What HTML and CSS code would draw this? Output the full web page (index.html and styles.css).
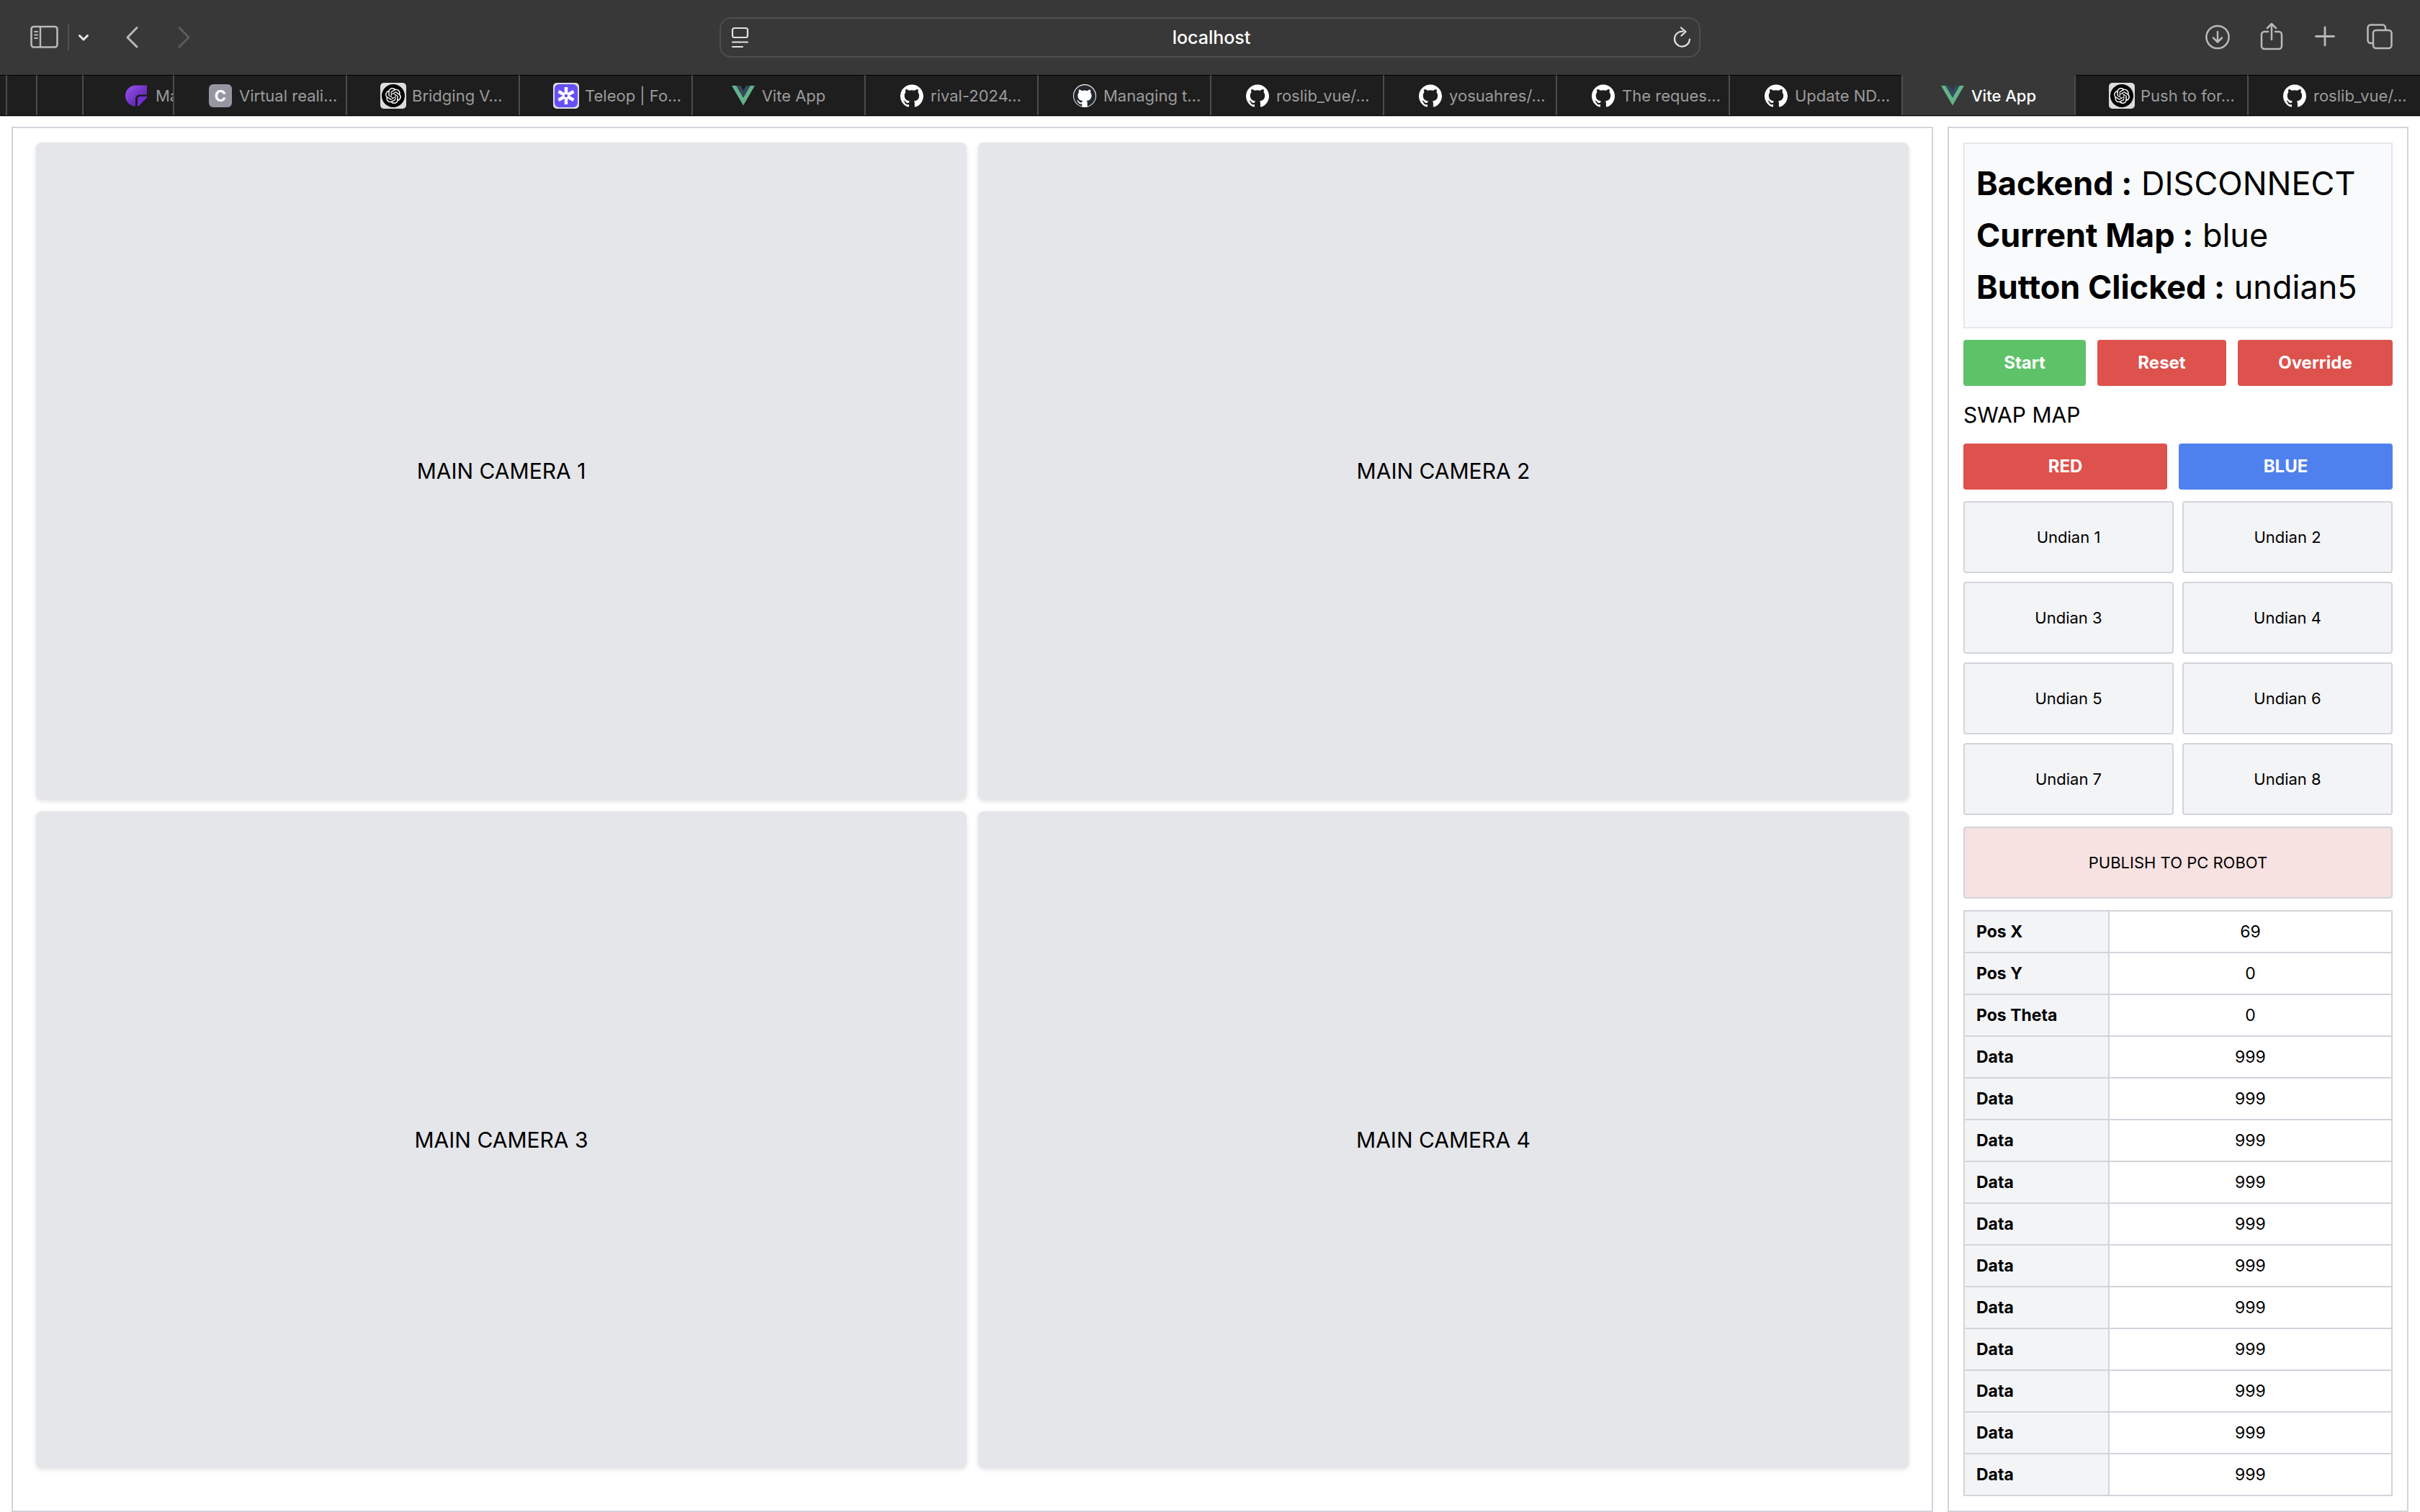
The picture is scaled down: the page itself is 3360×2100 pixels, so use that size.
FILE: index.html
```html
<!DOCTYPE html>
<html lang="en">
<head>
<meta charset="utf-8">
<meta name="viewport" content="width=device-width, initial-scale=1">
<title>Vite App</title>
<link rel="stylesheet" href="styles.css">
</head>
<body>
<svg class="sprite" aria-hidden="true">
  <symbol id="github" viewBox="0 0 24 24"><path d="M12 .297c-6.63 0-12 5.373-12 12 0 5.303 3.438 9.8 8.205 11.385.6.113.82-.258.82-.577 0-.285-.01-1.04-.015-2.04-3.338.724-4.042-1.61-4.042-1.61C4.422 18.07 3.633 17.7 3.633 17.7c-1.087-.744.084-.729.084-.729 1.205.084 1.838 1.236 1.838 1.236 1.07 1.835 2.809 1.305 3.495.998.108-.776.417-1.305.76-1.605-2.665-.3-5.466-1.332-5.466-5.93 0-1.31.465-2.38 1.235-3.22-.135-.303-.54-1.523.105-3.176 0 0 1.005-.322 3.3 1.23.96-.267 1.98-.399 3-.405 1.02.006 2.04.138 3 .405 2.28-1.552 3.285-1.23 3.285-1.23.645 1.653.24 2.873.12 3.176.765.84 1.23 1.91 1.23 3.22 0 4.61-2.805 5.625-5.475 5.92.42.36.81 1.096.81 2.22 0 1.606-.015 2.896-.015 3.286 0 .315.21.69.825.57C20.565 22.092 24 17.592 24 12.297c0-6.627-5.373-12-12-12"/></symbol>
  <symbol id="openai" viewBox="0 0 36 36"><rect width="36" height="36" rx="5" fill="#dcdcdc"/><circle cx="18" cy="18" r="16" fill="#000"/><path transform="translate(7 7) scale(.917)" fill="#fff" d="M22.2819 9.8211a5.9847 5.9847 0 0 0-.5157-4.9108 6.0462 6.0462 0 0 0-6.5098-2.9A6.0651 6.0651 0 0 0 4.9807 4.1818a5.9847 5.9847 0 0 0-3.9977 2.9 6.0462 6.0462 0 0 0 .7427 7.0966 5.98 5.98 0 0 0 .511 4.9107 6.051 6.051 0 0 0 6.5146 2.9001A5.9847 5.9847 0 0 0 13.2599 24a6.0557 6.0557 0 0 0 5.7718-4.2058 5.9894 5.9894 0 0 0 3.9977-2.9001 6.0557 6.0557 0 0 0-.7475-7.0729zm-9.022 12.6081a4.4755 4.4755 0 0 1-2.8764-1.0408l.1419-.0804 4.7783-2.7582a.7948.7948 0 0 0 .3927-.6813v-6.7369l2.02 1.1686a.071.071 0 0 1 .038.052v5.5826a4.504 4.504 0 0 1-4.4945 4.4944zm-9.6607-4.1254a4.4708 4.4708 0 0 1-.5346-3.0137l.142.0852 4.783 2.7582a.7712.7712 0 0 0 .7806 0l5.8428-3.3685v2.3324a.0804.0804 0 0 1-.0332.0615L9.74 19.9502a4.4992 4.4992 0 0 1-6.1408-1.6464zM2.3408 7.8956a4.485 4.485 0 0 1 2.3655-1.9728V11.6a.7664.7664 0 0 0 .3879.6765l5.8144 3.3543-2.0201 1.1685a.0757.0757 0 0 1-.071 0l-4.8303-2.7865A4.504 4.504 0 0 1 2.3408 7.872zm16.5963 3.8558L13.1038 8.364 15.1192 7.2a.0757.0757 0 0 1 .071 0l4.8303 2.7913a4.4944 4.4944 0 0 1-.6765 8.1042v-5.6772a.79.79 0 0 0-.407-.667zm2.0107-3.0231l-.142-.0852-4.7735-2.7818a.7759.7759 0 0 0-.7854 0L9.409 9.2297V6.8974a.0662.0662 0 0 1 .0284-.0615l4.8303-2.7866a4.4992 4.4992 0 0 1 6.6802 4.66zM8.3065 12.863l-2.02-1.1638a.0804.0804 0 0 1-.038-.0567V6.0742a4.4992 4.4992 0 0 1 7.3757-3.4537l-.142.0805L8.704 5.459a.7948.7948 0 0 0-.3927.6813zm1.0976-2.3654l2.602-1.4998 2.6069 1.4998v2.9994l-2.5974 1.4997-2.6067-1.4997Z"/></symbol>
  <symbol id="vue" viewBox="0 0 32 32"><path fill="#63b388" d="M0 2h6.4L16 18.6 25.6 2H32L16 29.6z"/><path fill="#35495e" d="M6.4 2h5.8L16 8.8 19.8 2h5.8L16 18.6z"/></symbol>
</svg>

<header class="browser">
  <div class="toolbar">
    <div class="toolbar-side toolbar-start">
      <button class="tool" type="button" aria-label="Show sidebar"><svg width="40" height="36" viewBox="0 0 40 36" fill="none" stroke="#b9b9b9"><rect x="1.5" y="3" width="36" height="28.500" rx="3.500" stroke-width="2.600"/><path stroke-width="2.400" d="M14 3v28"/><path stroke-width="1.800" stroke-linecap="round" d="M6 10h4.200M6 14.500h4.200M6 19h4.200"/></svg></button>
      <span class="tool-divider"></span>
      <button class="tool" type="button" aria-label="Tab groups"><svg width="16" height="36" viewBox="0 0 16 36" fill="none" stroke="#e6e6e6" stroke-width="3" stroke-linecap="round" stroke-linejoin="round"><path d="M2.500 15.500L8 21l5.500-5.500"/></svg></button>
      <button class="tool tool-nav" type="button" aria-label="Back"><svg width="20" height="36" viewBox="0 0 20 36" fill="none" stroke="#b9b9b9" stroke-width="3" stroke-linecap="round" stroke-linejoin="round"><path d="M16 4.500L3 18l13 13"/></svg></button>
      <button class="tool tool-nav" type="button" aria-label="Forward" disabled><svg width="20" height="36" viewBox="0 0 20 36" fill="none" stroke="#5c5c5c" stroke-width="3" stroke-linecap="round" stroke-linejoin="round"><path d="M5 4.500L18 18 5 31"/></svg></button>
    </div>
    <div class="address">
      <button class="tool" type="button" aria-label="Page settings"><svg width="26" height="36" viewBox="0 0 26 36" fill="none" stroke="#e2e2e2" stroke-width="2.200" stroke-linecap="round"><rect x="2" y="5" width="21" height="13" rx="2.500"/><path d="M2 24.500h21M2 31h14"/></svg></button>
      <input class="address-input" type="text" value="localhost" aria-label="Address">
      <button class="tool" type="button" aria-label="Reload"><svg width="26" height="36" viewBox="0 0 26 36" fill="none" stroke="#e2e2e2" stroke-width="2.200" stroke-linecap="round" stroke-linejoin="round"><path d="M13.500 9.600A10.500 10.500 0 1 0 23 20.500M11 4.500l6.500 5.500-6 5.500"/></svg></button>
    </div>
    <div class="toolbar-side toolbar-end">
      <button class="tool" type="button" aria-label="Downloads"><svg width="36" height="40" viewBox="0 0 36 40" fill="none" stroke="#b9b9b9" stroke-width="2.500" stroke-linecap="round" stroke-linejoin="round"><circle cx="18" cy="19.500" r="15.600"/><path d="M18 12v14M12 20.500l6 6 6-6"/></svg></button>
      <button class="tool" type="button" aria-label="Share"><svg width="36" height="40" viewBox="0 0 36 40" fill="none" stroke="#b9b9b9" stroke-width="2.500" stroke-linecap="round" stroke-linejoin="round"><path d="M13 12H8a4 4 0 0 0-4 4v16a4 4 0 0 0 4 4h20a4 4 0 0 0 4-4V16a4 4 0 0 0-4-4h-5M18 23V2M12 7l6-6 6 6"/></svg></button>
      <button class="tool" type="button" aria-label="New tab"><svg width="36" height="40" viewBox="0 0 36 40" fill="none" stroke="#b9b9b9" stroke-width="2.800" stroke-linecap="round"><path d="M17 6v25M4.500 18.500h25"/></svg></button>
      <button class="tool" type="button" aria-label="Tab overview"><svg width="36" height="40" viewBox="0 0 36 40" fill="none" stroke="#b9b9b9" stroke-width="2.500" stroke-linejoin="round"><path d="M9 28H5.500a4 4 0 0 1-4-4V6.500a4 4 0 0 1 4-4H22a4 4 0 0 1 4 4V10"/><rect x="9" y="10" width="25.500" height="25" rx="4"/></svg></button>
    </div>
  </div>

  <nav class="tabs" aria-label="Open tabs">
    <span class="tab-stack stack-1"></span>
    <span class="tab-stack stack-2"></span>
    <span class="tab-stack stack-3"></span>
    <a class="tab tab-cut" href="#"><svg class="favicon" viewBox="0 0 32 32"><defs><linearGradient id="violet" x1="0" y1="0" x2="1" y2="1"><stop offset="0" stop-color="#9a55f0"/><stop offset="1" stop-color="#4d17a0"/></linearGradient></defs><path fill="url(#violet)" d="M15 1.500h15v13H19.500a5.500 5.500 0 0 0-5.500 5.500v10.500A14.500 14.500 0 0 1 15 1.500z"/><path fill="#6d2fd0" d="M30 17v1.500L18.500 30.500H17v-10A3.500 3.500 0 0 1 20.500 17z"/></svg><span>Ma</span></a>
    <a class="tab" href="#"><span class="favicon favicon-letter">C</span><span>Virtual reali…</span></a>
    <a class="tab" href="#"><svg class="favicon favicon-framed"><use href="#openai"/></svg><span>Bridging V…</span></a>
    <a class="tab" href="#"><svg class="favicon favicon-framed" viewBox="0 0 36 36"><rect width="36" height="36" rx="5" fill="#dcdcdc"/><rect x="2" y="2" width="32" height="32" rx="6" fill="#654ff5"/><g stroke="#fff" stroke-width="4.500"><path d="M18 6v24M7.500 12l21 12M7.500 24l21-12"/></g><circle cx="18" cy="18" r="4.500" fill="#fff"/><circle cx="18" cy="18" r="2.200" fill="#654ff5"/></svg><span>Teleop | Fo…</span></a>
    <a class="tab tab-fit" href="#"><svg class="favicon"><use href="#vue"/></svg><span>Vite App</span></a>
    <a class="tab" href="#"><svg class="favicon"><use href="#github"/></svg><span>rival-2024…</span></a>
    <a class="tab" href="#"><svg class="favicon" viewBox="0 0 32 32"><circle cx="16" cy="16" r="16" fill="#fff"/><use href="#github" x="1" y="1" width="30" height="30" fill="#24292f"/></svg><span>Managing t…</span></a>
    <a class="tab" href="#"><svg class="favicon"><use href="#github"/></svg><span>roslib_vue/…</span></a>
    <a class="tab" href="#"><svg class="favicon"><use href="#github"/></svg><span>yosuahres/…</span></a>
    <a class="tab" href="#"><svg class="favicon"><use href="#github"/></svg><span>The reques…</span></a>
    <a class="tab" href="#"><svg class="favicon"><use href="#github"/></svg><span>Update ND…</span></a>
    <a class="tab tab-fit tab-active" href="#" aria-current="page"><svg class="favicon"><use href="#vue"/></svg><span>Vite App</span></a>
    <a class="tab" href="#"><svg class="favicon favicon-framed"><use href="#openai"/></svg><span>Push to for…</span></a>
    <a class="tab" href="#"><svg class="favicon"><use href="#github"/></svg><span>roslib_vue/…</span></a>
  </nav>
</header>

<main class="dashboard">
  <section class="panel cameras" aria-label="Cameras">
    <div class="camera">MAIN CAMERA 1</div>
    <div class="camera">MAIN CAMERA 2</div>
    <div class="camera">MAIN CAMERA 3</div>
    <div class="camera">MAIN CAMERA 4</div>
  </section>

  <aside class="panel controls" aria-label="Controls">
    <div class="status">
      <p><strong>Backend :</strong> DISCONNECT</p>
      <p><strong>Current Map :</strong> blue</p>
      <p><strong>Button Clicked :</strong> undian5</p>
    </div>
    <div class="button-row">
      <button class="action green" type="button">Start</button>
      <button class="action red" type="button">Reset</button>
      <button class="action red" type="button">Override</button>
    </div>
    <h2 class="heading">SWAP MAP</h2>
    <div class="button-row">
      <button class="action red" type="button">RED</button>
      <button class="action blue" type="button">BLUE</button>
    </div>
    <div class="undian-grid">
      <button class="choice" type="button">Undian 1</button>
      <button class="choice" type="button">Undian 2</button>
      <button class="choice" type="button">Undian 3</button>
      <button class="choice" type="button">Undian 4</button>
      <button class="choice" type="button">Undian 5</button>
      <button class="choice" type="button">Undian 6</button>
      <button class="choice" type="button">Undian 7</button>
      <button class="choice" type="button">Undian 8</button>
    </div>
    <button class="choice publish" type="button">PUBLISH TO PC ROBOT</button>
    <table class="data">
      <tbody>
        <tr><th scope="row">Pos X</th><td>69</td></tr>
        <tr><th scope="row">Pos Y</th><td>0</td></tr>
        <tr><th scope="row">Pos Theta</th><td>0</td></tr>
        <tr><th scope="row">Data</th><td>999</td></tr>
        <tr><th scope="row">Data</th><td>999</td></tr>
        <tr><th scope="row">Data</th><td>999</td></tr>
        <tr><th scope="row">Data</th><td>999</td></tr>
        <tr><th scope="row">Data</th><td>999</td></tr>
        <tr><th scope="row">Data</th><td>999</td></tr>
        <tr><th scope="row">Data</th><td>999</td></tr>
        <tr><th scope="row">Data</th><td>999</td></tr>
        <tr><th scope="row">Data</th><td>999</td></tr>
        <tr><th scope="row">Data</th><td>999</td></tr>
        <tr><th scope="row">Data</th><td>999</td></tr>
      </tbody>
    </table>
  </aside>
</main>
</body>
</html>
```
FILE: styles.css
```css
*, *::before, *::after { box-sizing: border-box; }

body {
  margin: 0;
  min-height: 100vh;
  display: flex;
  flex-direction: column;
  background: #fff;
  color: #000;
  font-family: Inter, "Liberation Sans", sans-serif;
  font-size: 30px;
  line-height: 48px;
}

button, input { font: inherit; color: inherit; }
svg { display: block; }
.sprite { position: absolute; width: 0; height: 0; }

/* Browser toolbar */
.browser {
  background: #383838;
  border-bottom: 1px solid #b8b8b4;
}
.toolbar {
  display: grid;
  grid-template-columns: minmax(0, 1fr) minmax(0, 1362px) minmax(0, 1fr);
  align-items: center;
  height: 104px;
}
.toolbar-side {
  display: flex;
  align-items: center;
}
.toolbar-start { gap: 12px; padding-left: 42px; }
.toolbar-end { justify-content: flex-end; gap: 39px; padding-right: 38px; }
.tool { padding: 0; border: 0; background: none; }
.tool-nav { margin-left: 38px; }
.tool-divider { width: 2px; height: 36px; background: #4f4f4f; }

.address {
  display: flex;
  align-items: center;
  height: 56px;
  padding: 0 10px 0 14px;
  border: 2px solid #4e4e4e;
  border-radius: 16px;
}
.address-input {
  flex: 1;
  min-width: 0;
  padding: 0;
  border: 0;
  background: none;
  color: #fff;
  font-size: 25px;
  font-weight: 500;
  line-height: 32px;
  text-align: center;
}

/* Tab strip */
.tabs {
  display: flex;
  height: 57px;
  border-bottom: 1px solid #000;
}
.tab, .tab-stack {
  background: #1e1e1e;
  border-top: 1px solid #000;
  border-left: 2px solid #4c4c4c;
}
.stack-1 { width: 8px; border-left: 0; }
.stack-2 { width: 42px; }
.stack-3 { width: 64px; }
.tab {
  flex: 1 1 240px;
  min-width: 0;
  display: flex;
  align-items: center;
  gap: 10px;
  padding-left: 48px;
  overflow: hidden;
  color: #9b9b9b;
  font-size: 22px;
  line-height: 28px;
  white-space: nowrap;
  text-decoration: none;
}
.tab-cut { flex: 0 0 126px; padding-left: 58px; }
.tab-fit { justify-content: center; padding-left: 0; }
.tab-active {
  background: #383838;
  border-top-color: #383838;
  color: #fff;
  font-weight: 500;
}
.favicon {
  flex: none;
  width: 32px;
  height: 32px;
  fill: #fff;
}
.favicon-framed { width: 36px; height: 36px; margin: 0 -2px; }
.favicon-letter {
  border-radius: 6px;
  background: #9696a3;
  color: #fff;
  font-weight: 700;
  line-height: 32px;
  text-align: center;
}

/* Dashboard */
.dashboard {
  flex: 1;
  display: flex;
  gap: 20px;
  padding: 14px 16px 0;
}
.panel { border: 2px solid #d1d5db; }
.cameras {
  flex: 1;
  display: grid;
  grid-template-columns: 1fr 1fr;
  grid-auto-rows: 1fr;
  gap: 16px;
  padding: 20px 32px 59px;
}
.camera {
  display: grid;
  place-items: center;
  border-radius: 8px;
  background: #e5e6ea;
  box-shadow: 0 2px 6px rgba(0, 0, 0, .12);
}

.controls {
  flex: 0 0 640px;
  display: flex;
  flex-direction: column;
  gap: 16px;
  padding: 20px;
}
.status {
  padding: 19px 16px;
  border: 2px solid #e5e7eb;
  background: #f9fafc;
  font-size: 45px;
  line-height: 72px;
}
.status p { margin: 0; }
.button-row { display: flex; gap: 16px; }
.action {
  flex: 1 1 auto;
  padding: 16px 24px;
  border: 0;
  border-radius: 4px;
  color: #fff;
  font-size: 24px;
  font-weight: 700;
  line-height: 32px;
}
.green { background: #5ec269; }
.red { background: #dd524c; }
.blue { background: #4f81ee; }
.heading { margin: 0; font-size: 30px; font-weight: 400; }

.undian-grid {
  display: grid;
  grid-template-columns: 1fr 1fr;
  gap: 12px;
}
.choice {
  padding: 32px;
  border: 2px solid #d1d5db;
  border-radius: 4px;
  background: #f3f4f6;
  font-size: 22px;
  line-height: 32px;
}
.publish { background: #f7e2e1; }

.data {
  width: 100%;
  border-collapse: collapse;
  font-size: 23px;
  line-height: 24px;
}
.data th, .data td {
  padding: 16px;
  border: 2px solid #d1d5db;
}
.data th {
  width: 201px;
  background: #f3f4f6;
  font-weight: 700;
  text-align: left;
}
.data td { text-align: center; }
```
